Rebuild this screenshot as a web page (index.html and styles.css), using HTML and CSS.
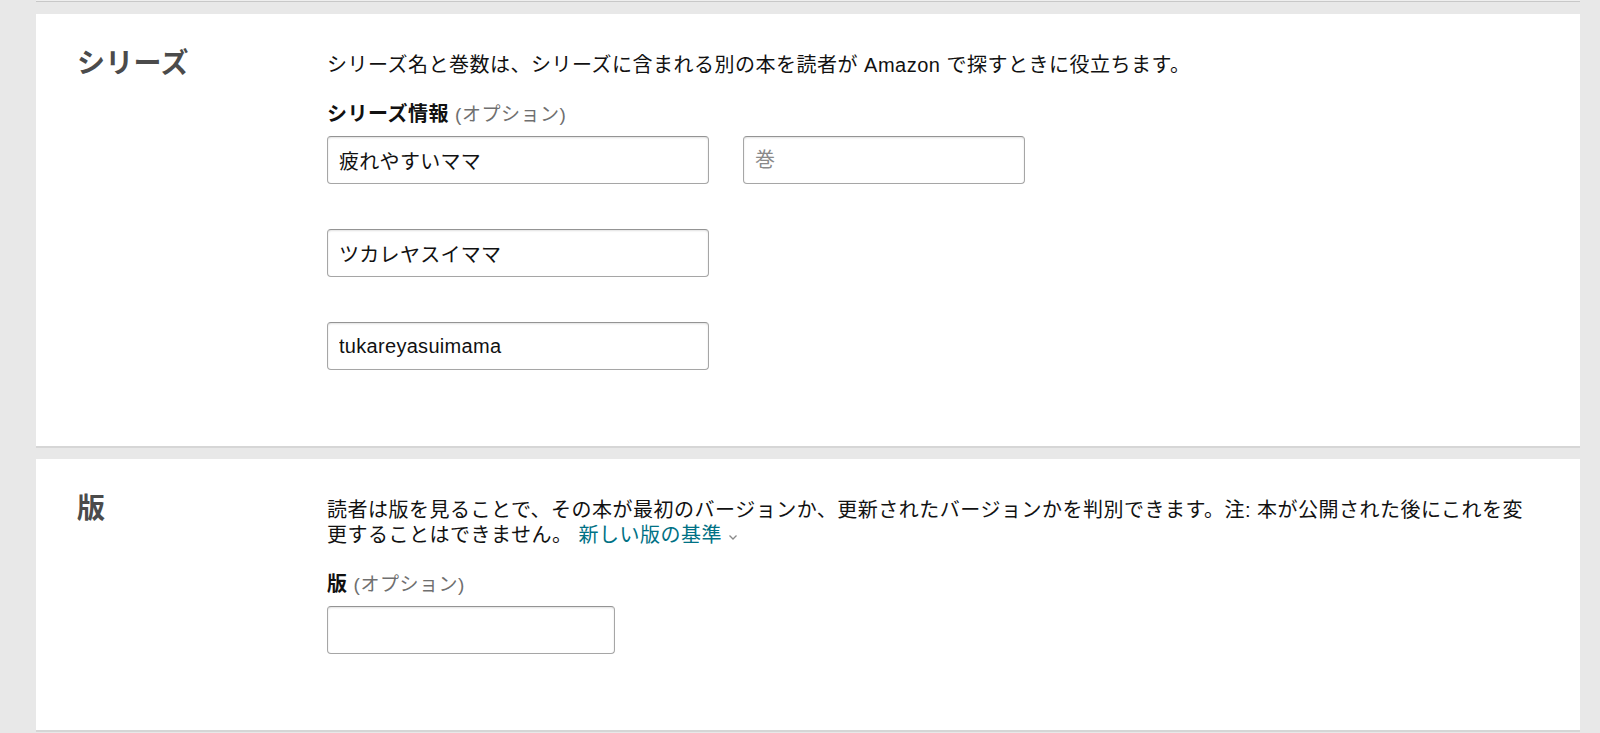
FILE: index.html
```html
<!DOCTYPE html>
<html lang="ja">
<head>
<meta charset="utf-8">
<title>シリーズ</title>
<link rel="stylesheet" href="styles.css">
</head>
<body>
<div class="page">
  <div class="stub"></div>

  <section class="panel">
    <h2 class="panel-title">シリーズ</h2>
    <div class="panel-body">
      <p class="desc">シリーズ名と巻数は、シリーズに含まれる別の本を読者が Amazon で探すときに役立ちます。</p>
      <div class="field-label"><b>シリーズ情報</b> <span class="opt">(オプション)</span></div>
      <div class="row">
        <input class="input input-series" type="text" value="疲れやすいママ">
        <input class="input input-vol" type="text" placeholder="巻">
      </div>
      <div class="row row-next">
        <input class="input input-series" type="text" value="ツカレヤスイママ">
      </div>
      <div class="row row-next">
        <input class="input input-series" type="text" value="tukareyasuimama">
      </div>
    </div>
  </section>

  <section class="panel">
    <h2 class="panel-title">版</h2>
    <div class="panel-body">
      <p class="desc">読者は版を見ることで、その本が最初のバージョンか、更新されたバージョンかを判別できます。注: 本が公開された後にこれを変更することはできません。 <a class="link" href="#">新しい版の基準<svg class="chev" width="10" height="7" viewBox="0 0 10 7"><path d="M1.5 1.5 L5 5 L8.5 1.5" fill="none" stroke="#8a8a8a" stroke-width="1.3"/></svg></a></p>
      <div class="field-label"><b>版</b> <span class="opt">(オプション)</span></div>
      <div class="row">
        <input class="input input-edition" type="text">
      </div>
    </div>
  </section>
</div>
</body>
</html>
```
FILE: styles.css
```css
html, body {
  margin: 0;
  padding: 0;
  background: #e8e8e8;
}

body {
  font-family: "Liberation Sans", "Noto Sans CJK JP", sans-serif;
  font-size: 20px;
  color: #111111;
  letter-spacing: 0.5px;
}

.page {
  width: 1544px;
  margin-left: 36px;
  height: 733px;
  overflow: hidden;
}

.stub {
  height: 1px;
  background: #eeeeee;
  border-bottom: 1px solid #c8c8c8;
  margin-bottom: 12px;
}

.panel {
  background: #ffffff;
  border-bottom: 2px solid #d6d6d6;
  display: grid;
  grid-template-columns: 250px 1fr;
  padding: 39px 43px 76px 41px;
  margin-bottom: 11px;
}

.panel-title {
  margin: 0;
  font-size: 28px;
  line-height: 22px;
  font-weight: bold;
  color: #4b4b4b;
  letter-spacing: 0.3px;
}

.panel-body {
  min-width: 0;
}

.desc {
  margin: 0;
  line-height: 25px;
}

.field-label {
  margin-top: 24px;
  line-height: 25px;
}

.field-label b {
  font-weight: bold;
  color: #111111;
}

.opt {
  color: #6f6f6f;
  font-size: 19px;
}

.row {
  display: flex;
  gap: 34px;
  margin-top: 9px;
}

.row-next {
  margin-top: 45px;
}

.input {
  box-sizing: border-box;
  height: 48px;
  margin: 0;
  padding: 0 11px;
  font: inherit;
  font-size: 20px;
  letter-spacing: 0.3px;
  color: #111111;
  background: #ffffff;
  border: 1px solid #a6a6a6;
  border-top-color: #949494;
  border-radius: 4px;
  box-shadow: 0 1px 0 rgba(255, 255, 255, 0.5), inset 0 1px 2px rgba(0, 0, 0, 0.12);
  outline: none;
}

.input::placeholder {
  color: #8a8a8a;
}

.input-series {
  width: 382px;
}

.input-vol {
  width: 282px;
}

.input-edition {
  width: 288px;
}

.link {
  display: inline-block;
  line-height: 18px;
  color: #007185;
  text-decoration: none;
}

.chev {
  margin-left: 6px;
  vertical-align: 1px;
}
```
